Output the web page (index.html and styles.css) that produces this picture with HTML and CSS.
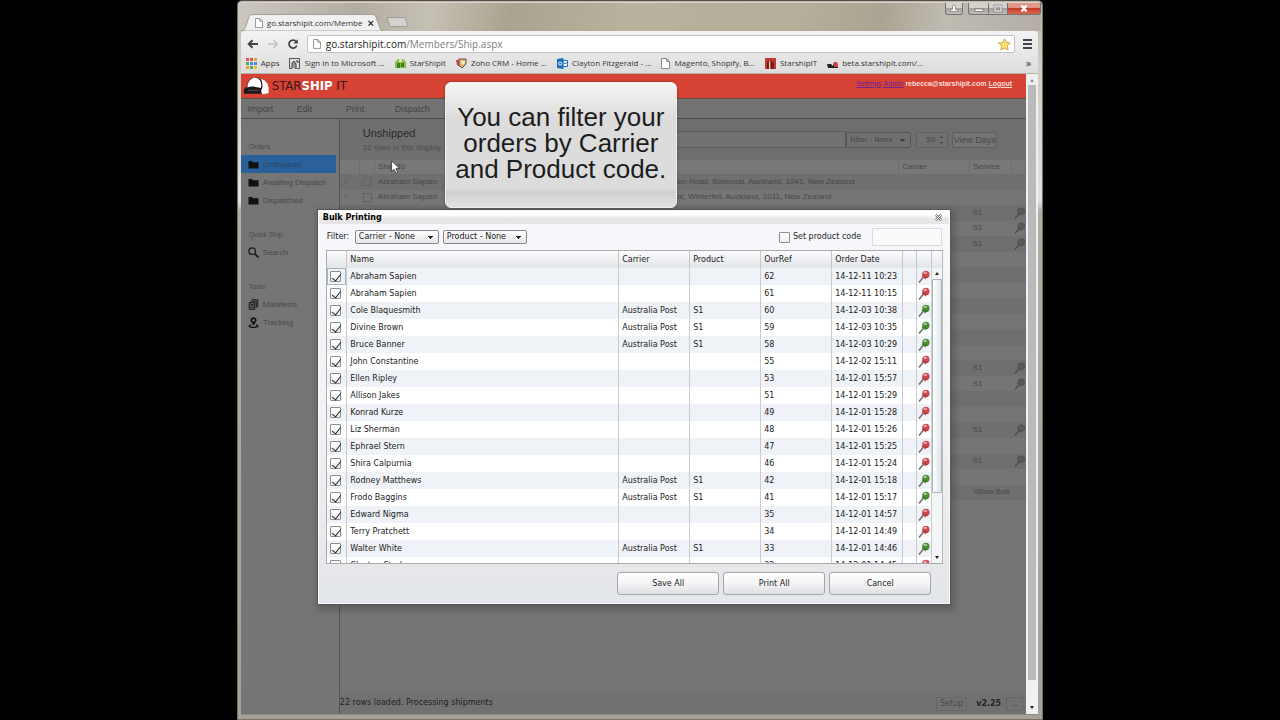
FILE: index.html
```html
<!DOCTYPE html>
<html lang="en">
<head>
<meta charset="utf-8">
<title>StarShipIt - Bulk Printing</title>
<link rel="stylesheet" href="styles.css">
</head>
<body>
<svg class="defs" aria-hidden="true">
  <symbol id="pin" viewBox="0 0 12 13">
    <path d="M1 12.500 L5.500 7" stroke="#6e6a6a" stroke-width="1.500" fill="none"/>
    <path d="M3.600 6.200 L7.600 9.400 L8.600 7.600 L5.200 4.800Z" fill="currentColor"/>
    <circle cx="7.900" cy="4.400" r="3.700" fill="currentColor"/>
    <path d="M5.400 6.600 Q7.800 6.800 9.600 7.800" stroke="#000" stroke-opacity=".3" fill="none"/>
    <ellipse cx="7.200" cy="2.900" rx="1.700" ry="1.100" fill="#fff" fill-opacity=".55"/>
  </symbol>
  <symbol id="dimpin" viewBox="0 0 12 13">
    <path d="M1 12.500 L5.500 7" stroke="#4c4c4c" stroke-width="1.500" fill="none"/>
    <path d="M3.600 6.200 L7.600 9.400 L8.600 7.600 L5.200 4.800Z" fill="#505050"/>
    <circle cx="7.900" cy="4.400" r="3.700" fill="#5a5a5a" stroke="#4c4c4c" stroke-width=".8"/>
  </symbol>
  <symbol id="doc" viewBox="0 0 9 11">
    <path d="M.5 .5H5.5L8.5 3.5V10.5H.5ZM5.5 .5V3.5H8.5" fill="#fff" stroke="#888"/>
  </symbol>
  <symbol id="folder" viewBox="0 0 11 9">
    <path d="M.5 1H4L5 2.2H10.5V8.5H.5Z" fill="#111"/>
  </symbol>
  <symbol id="helmet" viewBox="0 0 28 20">
    <path d="M1 18 Q0 12 4 11 Q5 2 11 1.500 Q17 0 20 5 L21 18Z" fill="#1c1718"/>
    <path d="M4.500 11.500 Q5 3 11 1.500 Q17 1 18.500 6 Q19.500 9 18.500 12 Q10 9.500 4.500 11.500Z" fill="#fff"/>
    <path d="M5 14.500 H16" stroke="#55504f" stroke-width="1"/>
    <path d="M18.500 2.500 Q28 5 26.500 17.500 L20.500 18.500 Q17.500 16 20 12 Q21 8 18.500 2.500Z" fill="#fff"/>
  </symbol>
</svg>

<div class="window">
  <header class="titlebar">
    <div class="tab">
      <svg class="tab-shape" viewBox="0 0 143 17" preserveAspectRatio="none" aria-hidden="true"><path d="M0 17 C4 17 4 14 6 9 C8 3 8 .5 12 .5 H131 C135 .5 135 3 137 9 C139 14 139 17 143 17Z" fill="#f1f0f0" stroke="#8a867f" stroke-width=".7"/></svg>
      <svg class="tab-icon" aria-hidden="true"><use href="#doc"/></svg>
      <span class="tab-title">go.starshipit.com/Membe</span>
      <button class="tab-close" aria-label="Close tab">×</button>
    </div>
    <button class="new-tab" aria-label="New tab"></button>
    <div class="win-controls">
      <button class="wc user" aria-label="User"><svg viewBox="0 0 10 9"><path d="M1.500 7.500V5.500H3.500V2.500a1.500 1.500 0 0 1 3 0V5.500H8.500V7.500Z" fill="#fff" stroke="#666" stroke-width=".6"/></svg></button>
      <button class="wc min" aria-label="Minimise"><svg viewBox="0 0 10 9"><rect x="1" y="5" width="8" height="2.500" fill="#fff" stroke="#555" stroke-width=".6"/></svg></button>
      <button class="wc max" aria-label="Maximise"><svg viewBox="0 0 10 9"><rect x="2" y="2" width="6" height="5" fill="none" stroke="#555" stroke-width="2.400"/><rect x="2" y="2" width="6" height="5" fill="none" stroke="#fff" stroke-width="1.300"/></svg></button>
      <button class="wc close" aria-label="Close"><svg viewBox="0 0 10 9"><path d="M2.500 1.500 7.500 7.500M7.500 1.500 2.500 7.500" stroke="#fff" stroke-width="2"/></svg></button>
    </div>
  </header>

  <div class="chrome">
    <div class="toolbar">
      <button class="nav" aria-label="Back"><svg viewBox="0 0 12 10"><path d="M11 5H2M5.500 1.200 1.700 5l3.800 3.800" fill="none" stroke="#444" stroke-width="2"/></svg></button>
      <button class="nav" aria-label="Forward"><svg viewBox="0 0 12 10"><path d="M1 5H10M6.500 1.200 10.300 5 6.500 8.800" fill="none" stroke="#c2c2c2" stroke-width="1.600"/></svg></button>
      <button class="nav" aria-label="Reload"><svg viewBox="0 0 12 10"><path d="M9.200 2.600A4 4 0 1 0 9.800 6.500" fill="none" stroke="#444" stroke-width="1.800"/><path d="M10.800 .3V4.600H6.500Z" fill="#444"/></svg></button>
      <div class="omnibox">
        <svg class="tab-icon" aria-hidden="true"><use href="#doc"/></svg>
        <span class="url">go.starshipit.com<span class="path">/Members/Ship.aspx</span></span>
        <svg class="star" viewBox="0 0 14 14" aria-hidden="true"><path d="M7 .8 8.900 4.900 13.300 5.400 10 8.400 10.900 12.900 7 10.700 3.100 12.900 4 8.400 .7 5.400 5.100 4.900Z" fill="#fbe379" stroke="#c79a2e" stroke-width=".9"/></svg>
      </div>
      <button class="burger" aria-label="Menu"><i></i><i></i><i></i></button>
    </div>
    <nav class="bookmarks">
      <a href="#"><svg viewBox="0 0 11 11"><path d="M0 0h3v3H0zM4 0h3v3H4z" fill="#d8584c"/><path d="M8 0h3v3H8zM0 8h3v3H0z" fill="#e8a33b"/><path d="M0 4h3v3H0zM4 8h3v3H4z" fill="#52a55c"/><path d="M4 4h3v3H4zM8 4h3v3H8z" fill="#4b86d8"/><path d="M8 8h3v3H8z" fill="#e4bf3a"/></svg>Apps</a>
      <a href="#"><svg viewBox="0 0 11 11"><path d="M.5 3V.5h10v10H8M.5 3v7.500H3" fill="#ddd" stroke="#555"/><path d="M3 10V5l2-2 2 3v5M7 3h2v2" fill="#999" stroke="#444"/></svg>Sign in to Microsoft ...</a>
      <a href="#"><svg viewBox="0 0 11 11"><path d="M0 4 3 1h5l3 3v6H0z" fill="#8abf45"/><path d="M2 10V5h3v5zM6 9V5h3v4z" fill="#3d7a2c"/><path d="M4 1h3v3H4z" fill="#d8e7bd"/></svg>StarShipIt</a>
      <a href="#"><svg viewBox="0 0 11 11"><path d="M0 2h4v7L1 7z" fill="#c8433d"/><path d="M3 1h7v5l-4 4-3-3z" fill="#deb36c" stroke="#60574c"/><path d="M5 3h4v2L6 7z" fill="#f7ecc9"/></svg>Zoho CRM - Home ...</a>
      <a href="#"><svg viewBox="0 0 11 11"><path d="M6 2.500h4.500v6H6m0-4 2 1.500 2.500-2" fill="#fff" stroke="#1b6fb9"/><path d="M0 1 6.500 0v11L0 10z" fill="#1b6fb9"/><circle cx="3.200" cy="5.500" r="1.500" fill="none" stroke="#fff"/></svg>Clayton Fitzgerald - ...</a>
      <a href="#"><svg class="narrow"><use href="#doc"/></svg>Magento, Shopify, B...</a>
      <a href="#"><svg viewBox="0 0 11 11"><path d="M0 0h11v11H0z" fill="#c33a2e"/><path d="M2 11V4l2-2v9zM6 11V2l3 3v6z" fill="#702019"/><path d="M4 3h1v8H4z" fill="#f0c9c0"/></svg>StarshipIT</a>
      <a href="#"><svg viewBox="0 0 11 11"><path d="M0 6h4l2 2 1-4h3l1 6H1z" fill="#26201f"/><path d="M7 4h3l1 5H7z" fill="#d33d45"/></svg>beta.starshipit.com/...</a>
      <span class="more">»</span>
    </nav>
  </div>

  <div class="page">
    <div class="app">
      <div class="brandbar">
        <svg class="helmet" aria-hidden="true"><use href="#helmet"/></svg>
        <span class="brand">STAR<b>SHIP</b> IT</span>
        <div class="account"><a href="#">Settings</a> <a href="#">Admin</a> <b>rebecca@starshipit.com</b> <a href="#" class="logout">Logout</a></div>
      </div>
      <nav class="menubar"><a href="#">Import</a><a href="#">Edit</a><a href="#">Print</a><a href="#">Dispatch</a></nav>
      <div class="workspace">
        <aside class="sidebar">
          <h2>Orders</h2>
          <a href="#" class="active"><svg viewBox="0 0 11 9"><use href="#folder"/></svg>Unshipped</a>
          <a href="#"><svg viewBox="0 0 11 9"><use href="#folder"/></svg>Awaiting Dispatch</a>
          <a href="#"><svg viewBox="0 0 11 9"><use href="#folder"/></svg>Dispatched</a>
          <h2>Quick Ship</h2>
          <a href="#"><svg viewBox="0 0 11 11"><circle cx="4.200" cy="4.200" r="3.300" fill="none" stroke="#1a1a1a" stroke-width="1.200"/><path d="M6.600 6.600 10.400 10.400" stroke="#1a1a1a" stroke-width="1.800"/></svg>Search</a>
          <h2>Tools</h2>
          <a href="#"><svg viewBox="0 0 11 11"><path d="M4 .7H9.700V8M2.500 2.200H8.200V9" fill="none" stroke="#1a1a1a"/><path d="M1.200 3.700H6.700V10.400H1.200Z" fill="#666" stroke="#1a1a1a"/><path d="M2.500 5.500h3M2.500 7h3M2.500 8.500h3" stroke="#1a1a1a" stroke-width=".8"/></svg>Manifests</a>
          <a href="#"><svg viewBox="0 0 11 11"><path d="M5.500 8.500 3.200 5A2.900 2.900 0 1 1 7.800 5Z" fill="#111"/><circle cx="5.500" cy="3.200" r="1.200" fill="#777"/><path d="M3 7.500 1 9.300 3.500 10.400H7.500L10 9.300 8 7.500" fill="none" stroke="#111" stroke-width="1.200"/></svg>Tracking</a>
        </aside>
        <main class="main">
          <div class="listhead">
            <div class="heading"><h1>Unshipped</h1><p>22 rows in this display</p></div>
            <input class="search" type="text" aria-label="Search orders">
            <select class="dimselect" aria-label="Filter"><option>Filter - None</option></select>
            <input class="days" type="text" value="50" aria-label="Days">
            <button class="viewdays">View Days</button>
          </div>
          <table class="orders">
            <colgroup><col class="o-check"><col class="o-box"><col class="o-ship"><col><col class="o-carrier"><col class="o-service"><col class="o-pin"></colgroup>
            <thead><tr><th></th><th></th><th>Ship To</th><th></th><th>Carrier</th><th>Service</th><th></th></tr></thead>
            <tbody>
              <tr><td class="tick">✓</td><td><i class="box"></i></td><td>Abraham Sapien</td><td>Union Road, Balmoral, Auckland, 1041, New Zealand</td><td></td><td></td><td></td></tr>
              <tr><td class="tick">✓</td><td><i class="box"></i></td><td>Abraham Sapien</td><td>Moat, Winterfell, Auckland, 1011, New Zealand</td><td></td><td></td><td></td></tr>
              <tr><td colspan="5"></td><td>S1</td><td><svg class="pin"><use href="#dimpin"/></svg></td></tr>
              <tr><td colspan="5"></td><td>S1</td><td><svg class="pin"><use href="#dimpin"/></svg></td></tr>
              <tr><td colspan="5"></td><td>S1</td><td><svg class="pin"><use href="#dimpin"/></svg></td></tr>
              <tr><td colspan="7"></td></tr>
              <tr><td colspan="7"></td></tr>
              <tr><td colspan="7"></td></tr>
              <tr><td colspan="7"></td></tr>
              <tr><td colspan="7"></td></tr>
              <tr><td colspan="7"></td></tr>
              <tr><td colspan="7"></td></tr>
              <tr><td colspan="5"></td><td>S1</td><td><svg class="pin"><use href="#dimpin"/></svg></td></tr>
              <tr><td colspan="5"></td><td>S1</td><td><svg class="pin"><use href="#dimpin"/></svg></td></tr>
              <tr><td colspan="7"></td></tr>
              <tr><td colspan="7"></td></tr>
              <tr><td colspan="5"></td><td>S1</td><td><svg class="pin"><use href="#dimpin"/></svg></td></tr>
              <tr><td colspan="7"></td></tr>
              <tr><td colspan="5"></td><td>S1</td><td><svg class="pin"><use href="#dimpin"/></svg></td></tr>
              <tr><td colspan="7"></td></tr>
              <tr><td colspan="5"></td><td colspan="2">XBow Bolt</td></tr>
              <tr><td colspan="7"></td></tr>
            </tbody>
          </table>
          <footer class="status"><span>22 rows loaded. Processing shipments</span><button>Setup</button><b>v2.25</b><button>...</button></footer>
        </main>
      </div>
    </div>
    <div class="scrollbar"><i class="up"></i><div class="thumb"></div><i class="down"></i></div>

    <section class="dialog" role="dialog" aria-labelledby="dlg-title">
      <div class="dlg-title"><h2 id="dlg-title">Bulk Printing</h2><button aria-label="Close dialog"><svg viewBox="0 0 8 8"><path d="M1 1 7 7M7 1 1 7" stroke="#777" stroke-width="2.600"/><path d="M1 1 7 7M7 1 1 7" stroke="#fff" stroke-width="1"/></svg></button></div>
      <div class="filters">
        <label for="f-carrier">Filter:</label>
        <select id="f-carrier"><option>Carrier - None</option></select>
        <select aria-label="Product filter"><option>Product - None</option></select>
        <div class="setcode"><input type="checkbox" id="setcode"><label for="setcode">Set product code</label></div>
        <input class="code" type="text" aria-label="Product code">
      </div>
      <div class="grid">
        <table>
          <colgroup><col class="c-check"><col><col class="c-mid"><col class="c-mid"><col class="c-mid"><col class="c-mid"><col class="c-gap"><col class="c-pin"></colgroup>
          <thead><tr><th></th><th>Name</th><th>Carrier</th><th>Product</th><th>OurRef</th><th>Order Date</th><th></th><th></th></tr></thead>
          <tbody>
            <tr><td class="focus"><input type="checkbox" checked aria-label="Select 62"></td><td>Abraham Sapien</td><td></td><td></td><td>62</td><td>14-12-11 10:23</td><td></td><td><svg class="pin red"><use href="#pin"/></svg></td></tr>
            <tr><td><input type="checkbox" checked aria-label="Select 61"></td><td>Abraham Sapien</td><td></td><td></td><td>61</td><td>14-12-11 10:15</td><td></td><td><svg class="pin red"><use href="#pin"/></svg></td></tr>
            <tr><td><input type="checkbox" checked aria-label="Select 60"></td><td>Cole Blaquesmith</td><td>Australia Post</td><td>S1</td><td>60</td><td>14-12-03 10:38</td><td></td><td><svg class="pin green"><use href="#pin"/></svg></td></tr>
            <tr><td><input type="checkbox" checked aria-label="Select 59"></td><td>Divine Brown</td><td>Australia Post</td><td>S1</td><td>59</td><td>14-12-03 10:35</td><td></td><td><svg class="pin green"><use href="#pin"/></svg></td></tr>
            <tr><td><input type="checkbox" checked aria-label="Select 58"></td><td>Bruce Banner</td><td>Australia Post</td><td>S1</td><td>58</td><td>14-12-03 10:29</td><td></td><td><svg class="pin green"><use href="#pin"/></svg></td></tr>
            <tr><td><input type="checkbox" checked aria-label="Select 55"></td><td>John Constantine</td><td></td><td></td><td>55</td><td>14-12-02 15:11</td><td></td><td><svg class="pin red"><use href="#pin"/></svg></td></tr>
            <tr><td><input type="checkbox" checked aria-label="Select 53"></td><td>Ellen Ripley</td><td></td><td></td><td>53</td><td>14-12-01 15:57</td><td></td><td><svg class="pin red"><use href="#pin"/></svg></td></tr>
            <tr><td><input type="checkbox" checked aria-label="Select 51"></td><td>Allison Jakes</td><td></td><td></td><td>51</td><td>14-12-01 15:29</td><td></td><td><svg class="pin red"><use href="#pin"/></svg></td></tr>
            <tr><td><input type="checkbox" checked aria-label="Select 49"></td><td>Konrad Kurze</td><td></td><td></td><td>49</td><td>14-12-01 15:28</td><td></td><td><svg class="pin red"><use href="#pin"/></svg></td></tr>
            <tr><td><input type="checkbox" checked aria-label="Select 48"></td><td>Liz Sherman</td><td></td><td></td><td>48</td><td>14-12-01 15:26</td><td></td><td><svg class="pin red"><use href="#pin"/></svg></td></tr>
            <tr><td><input type="checkbox" checked aria-label="Select 47"></td><td>Ephrael Stern</td><td></td><td></td><td>47</td><td>14-12-01 15:25</td><td></td><td><svg class="pin red"><use href="#pin"/></svg></td></tr>
            <tr><td><input type="checkbox" checked aria-label="Select 46"></td><td>Shira Calpurnia</td><td></td><td></td><td>46</td><td>14-12-01 15:24</td><td></td><td><svg class="pin red"><use href="#pin"/></svg></td></tr>
            <tr><td><input type="checkbox" checked aria-label="Select 42"></td><td>Rodney Matthews</td><td>Australia Post</td><td>S1</td><td>42</td><td>14-12-01 15:18</td><td></td><td><svg class="pin green"><use href="#pin"/></svg></td></tr>
            <tr><td><input type="checkbox" checked aria-label="Select 41"></td><td>Frodo Baggins</td><td>Australia Post</td><td>S1</td><td>41</td><td>14-12-01 15:17</td><td></td><td><svg class="pin green"><use href="#pin"/></svg></td></tr>
            <tr><td><input type="checkbox" checked aria-label="Select 35"></td><td>Edward Nigma</td><td></td><td></td><td>35</td><td>14-12-01 14:57</td><td></td><td><svg class="pin red"><use href="#pin"/></svg></td></tr>
            <tr><td><input type="checkbox" checked aria-label="Select 34"></td><td>Terry Pratchett</td><td></td><td></td><td>34</td><td>14-12-01 14:49</td><td></td><td><svg class="pin red"><use href="#pin"/></svg></td></tr>
            <tr><td><input type="checkbox" checked aria-label="Select 33"></td><td>Walter White</td><td>Australia Post</td><td>S1</td><td>33</td><td>14-12-01 14:46</td><td></td><td><svg class="pin green"><use href="#pin"/></svg></td></tr>
            <tr><td><input type="checkbox" checked aria-label="Select 32"></td><td>Clayton Stark</td><td></td><td></td><td>32</td><td>14-12-01 14:45</td><td></td><td><svg class="pin red"><use href="#pin"/></svg></td></tr>
          </tbody>
        </table>
        <div class="gridscroll"><div class="cap"></div><i class="up"></i><div class="thumb"></div><i class="down"></i></div>
      </div>
      <div class="actions"><button>Save All</button><button>Print All</button><button>Cancel</button></div>
    </section>

    <p class="callout">You can filter your orders by Carrier and Product code.</p>
    <svg class="cursor" viewBox="0 0 9 14" aria-hidden="true"><path d="M.6 .8V11.500L3.100 9.300 4.800 13.200 6.600 12.400 4.900 8.600H8.300Z" fill="#fff" stroke="#222" stroke-width=".7"/></svg>
  </div>
</div>
</body>
</html>
```
FILE: styles.css
```css
* { box-sizing: border-box; }
body { margin: 0; background: #000; font-family: "Liberation Sans", Arial, sans-serif; font-size: 9px; color: #222; }
button, input, select { font: inherit; color: inherit; margin: 0; padding: 0; border: 0; background: none; border-radius: 0; }
h1, h2, p { margin: 0; font-weight: normal; }
a { color: inherit; text-decoration: none; }
svg { display: block; flex: none; }
table { border-collapse: collapse; table-layout: fixed; width: 100%; }
td, th { padding: 0; text-align: left; font-weight: normal; white-space: nowrap; }
.defs { position: absolute; width: 0; height: 0; }

.window {
  width: 63%; min-height: 100vh; margin: 0 auto; padding: 1px 4px 4px 3px;
  display: flex; flex-direction: column;
  background: linear-gradient(180deg, #bfb8a8 0, #cfcbc0 60px, #e4e1da 200px, #b3ada2 210px, #a7a197 100%);
  border: 1px solid #77716a; border-top-color: #554d4d; border-radius: 5px 5px 0 0;
}

/* title bar */
.titlebar {
  display: flex; align-items: flex-end; height: 29px; margin: 0 -3px; padding-left: 3px;
  border-top: 1px solid #d9d4cb; border-radius: 4px 4px 0 0;
  background: linear-gradient(100deg, #cbc7bf 0, #b3aca2 15%, #c5c0b4 24%, #aaa38f 34%, #b8b19c 48%, #b5ae99 70%, #aaa493 80%, #bfbbb1 88%, #b4aea6 100%);
}
.tab { position: relative; display: flex; align-items: center; width: 143px; height: 17px; padding-left: 14px; font: 8px/16px "Open Sans", "Noto Sans", sans-serif; color: #333; }
.tab > * { position: relative; }
.tab .tab-shape { position: absolute; inset: 0; width: 100%; height: 100%; }
.tab-icon { width: 8px; height: 10px; margin-right: 4px; }
.tab-title { flex: 1; overflow: hidden; white-space: nowrap; }
.tab-close { width: 10px; margin-right: 8px; font: bold 11px/14px "Liberation Sans", sans-serif; color: #333; }
.new-tab { width: 19px; height: 10px; margin: 0 0 4px 4px; background: #d5d3d0; border: 1px solid #a29c94; border-radius: 2px; transform: skewX(20deg); }
.win-controls { display: flex; align-self: flex-start; margin-left: auto; }
.wc { width: 20px; height: 12px; display: grid; place-items: center; border: 1px solid #77706c; border-top: 0; background: linear-gradient(#d5d1cd 0 45%, #a5a09c 50%, #c3bfbb); }
.wc svg { width: 10px; height: 9px; }
.wc.user { width: 18px; margin-right: 5px; border-radius: 0 0 3px 3px; }
.wc.min { border-radius: 0 0 0 3px; border-right: 0; }
.wc.close { width: 33px; border-radius: 0 0 3px 0; background: linear-gradient(#e29a8c 0 40%, #c23c28 50%, #d9694f); border-left: 0; }

/* browser chrome */
.chrome { background: linear-gradient(#f4f3f3, #dedddd); border-bottom: 1px solid #b5b0ac; border-radius: 3px 3px 0 0; color: #333; }
.toolbar { display: flex; align-items: center; height: 24px; padding: 2px 6px 0; gap: 8px; }
.nav { width: 12px; height: 12px; }
.nav svg { width: 12px; height: 12px; }
.omnibox { flex: 1; display: flex; align-items: center; height: 18px; padding: 0 3px 0 5px; background: #fff; border: 1px solid #c4c2c2; border-radius: 2px; font: 10px/16px "Open Sans", "Noto Sans", sans-serif; color: #222; }
.omnibox .tab-icon { margin-right: 5px; }
.path { color: #808080; }
.star { width: 13px; height: 13px; margin-left: auto; }
.burger { display: grid; gap: 2px; width: 9px; }
.burger i { height: 2px; background: #444; }
.bookmarks { display: flex; align-items: center; height: 18px; padding: 0 7px 2px 5px; gap: 10px; font: 8px/16px "Open Sans", "Noto Sans", sans-serif; white-space: nowrap; }
.bookmarks a { display: flex; align-items: center; gap: 4px; }
.bookmarks svg { width: 11px; height: 11px; }
.bookmarks svg.narrow { width: 9px; }
.more { margin-left: auto; font-size: 11px; }

/* page */
.page { position: relative; flex: 1; display: flex; border: 1px solid #8c8a86; border-width: 0 0 1px; }
.app { flex: 1; min-width: 0; display: flex; flex-direction: column; background: #757575; }
.brandbar { display: flex; align-items: center; height: 24px; padding: 0 14px 0 2px; background: #d64234; }
.helmet { width: 27px; height: 20px; }
.brand { margin-left: 2px; font: 13px/20px "DejaVu Sans Condensed", "DejaVu Sans", sans-serif; color: #3a1614; }
.brand b { color: #fff; }
.account { margin: 0 0 5px auto; font: bold 7px/10px "Liberation Sans", sans-serif; color: #f9dcd8; }
.account a { color: #6b2596; font-weight: normal; text-decoration: underline; }
.account .logout { color: #f9dcd8; font-weight: bold; }
.menubar { display: flex; align-items: center; height: 21px; padding-left: 7px; border-top: 1px solid #5d4d4b; border-bottom: 1px solid #4e4e4e; background: #737373; color: #434343; }
.menubar a { width: 49px; }
.workspace { flex: 1; display: flex; }
.sidebar { width: 99px; padding-top: 23px; border-right: 1px solid #555; background: #757575; color: #484848; font-size: 9px; }
.sidebar h2 { padding-left: 8px; font-size: 7px; line-height: 10px; margin: 0 0 3px; }
.sidebar a + h2 { margin: 21px 0 3px; }
.sidebar a { display: flex; align-items: center; gap: 4px; height: 18px; padding-left: 7px; font-size: 8px; white-space: nowrap; }
.sidebar svg { width: 11px; height: 11px; }
.sidebar .active { width: 95px; background: #2b619b; color: #274468; }

.main { flex: 1; min-width: 0; display: flex; flex-direction: column; color: #484848; font-size: 8px; }
.listhead { display: flex; align-items: center; height: 41px; padding: 0 29px 0 23px; background: #6e6e6e; }
.heading { width: 87px; }
.heading h1 { font-size: 11px; line-height: 16px; color: #2a2a2a; }
.heading p { line-height: 14px; color: #4d4d4d; white-space: nowrap; }
.search { flex: 1; min-width: 0; height: 17px; border: 1px solid #5a5a5a; background: #727272; }
.days {
  width: 32px; height: 16px; margin: 0 4px 0 5px; padding-left: 9px; border: 1px solid #616161; font-size: 8px;
  background:
    linear-gradient(#4a4a4a, #4a4a4a) right 5px top 3px / 1px 1px no-repeat,
    linear-gradient(#4a4a4a, #4a4a4a) right 4px top 4px / 3px 1px no-repeat,
    linear-gradient(#4a4a4a, #4a4a4a) right 4px top 9px / 3px 1px no-repeat,
    linear-gradient(#4a4a4a, #4a4a4a) right 5px top 10px / 1px 1px no-repeat,
    #707070;
}
.viewdays { width: 45px; height: 16px; border: 1px solid #5f5f5f; border-radius: 2px; background: #757575; font-size: 9px; white-space: nowrap; }
.orders { height: 356px; }
.orders th { height: 14px; background: #787878; border-right: 1px solid #6c6c6c; }
.orders td { height: 15px; }
.orders td, .orders th { padding-left: 3px; line-height: 10px; }
.orders tbody tr:nth-child(odd) { background: #6f6f6f; }
.o-check { width: 20px; }
.o-box { width: 15px; }
.o-ship { width: 288px; }
.o-carrier { width: 71px; }
.o-service { width: 42px; }
.o-pin { width: 14px; }
.tick { color: #5f5f5f; }
.box { display: block; width: 9px; height: 9px; border: 1px solid #626262; }
.orders .pin { width: 11px; height: 12px; margin-left: -1px; }
.status { display: flex; align-items: center; height: 20px; margin-top: auto; padding-right: 3px; font: 8px/16px "DejaVu Sans", sans-serif; color: #222; background: #717171; }
.status span { flex: 1; padding-bottom: 3px; }
.status b { margin: 0 5px 0 9px; }
.status button { min-width: 17px; height: 14px; padding: 0 3px; border: 1px solid #666; color: #484848; line-height: 12px; }

.scrollbar, .gridscroll { display: flex; flex-direction: column; align-items: center; }
.scrollbar { width: 12px; padding: 5px 1px; background: #f1f0f0; }
.scrollbar .thumb { width: 8px; flex: 1; margin: 3px 0 26px; background: #bababa; }
.up, .down { width: 0; height: 0; border: 2px solid transparent; border-width: 0 2px 3px; border-bottom-color: #888; }
.down { border-width: 3px 2px 0; border-top-color: #222; }

/* dialog */
.dialog {
  position: absolute; top: 136px; left: 77px; right: 88px; padding-bottom: 8px;
  font: 8px/10px "DejaVu Sans", sans-serif; color: #222;
  background: linear-gradient(#f7f8fc, #f3f3f5 50%, #e8e7ea 90%, #e2e7ec);
  border: 1px solid #fafafa; box-shadow: 0 0 0 1px #555, 2px 3px 7px 3px rgba(0, 0, 0, .2);
}
.dlg-title { display: flex; align-items: center; justify-content: space-between; height: 13px; padding: 0 7px 0 4px; background: linear-gradient(#fff 30%, #e6e6e6 60%); }
.dlg-title h2 { font-size: 8px; font-weight: bold; color: #000; }
.dlg-title svg { width: 7px; height: 7px; }
.filters { display: flex; align-items: center; height: 26px; padding: 0 7px 0 8px; }
.filters label[for="f-carrier"] { width: 28px; }
select { appearance: none; padding: 0 3px; border: 1px solid #888; border-radius: 2px; }
.filters select {
  width: 84px; height: 14px; margin-right: 4px; color: #222;
  background:
    linear-gradient(#222, #222) right 5px top 5px / 5px 1px no-repeat,
    linear-gradient(#222, #222) right 6px top 6px / 3px 1px no-repeat,
    linear-gradient(#222, #222) right 7px top 7px / 1px 1px no-repeat,
    linear-gradient(#fefefe, #e6e7ea);
}
.dimselect {
  width: 65px; height: 16px; font: 7px/12px "DejaVu Sans", sans-serif; border-color: #555; color: #444;
  background:
    linear-gradient(#3d3d3d, #3d3d3d) right 5px top 6px / 5px 1px no-repeat,
    linear-gradient(#3d3d3d, #3d3d3d) right 6px top 7px / 3px 1px no-repeat,
    linear-gradient(#3d3d3d, #3d3d3d) right 7px top 8px / 1px 1px no-repeat,
    linear-gradient(#707070, #707070);
}
.setcode { display: flex; align-items: center; gap: 3px; margin-left: auto; }
.code { width: 70px; height: 18px; margin-left: 11px; border: 1px solid #d9dadd; background: #fafafb; }

input[type="checkbox"] { appearance: none; position: relative; display: block; width: 11px; height: 11px; border: 1px solid #8b8d91; border-radius: 1px; background: linear-gradient(#fff, #eceef0); }
input[type="checkbox"]:checked::after { content: ""; position: absolute; left: 3px; top: 0; width: 4px; height: 8px; border: solid #222; border-width: 0 1px 1px 0; transform: rotate(38deg); }

.grid { display: flex; height: 314px; margin: 0 6px 0 7px; overflow: hidden; align-items: flex-start; background: #fff; border: 1px solid #a9acb1; border-right-width: 0; }
.grid table { flex: 1; width: auto; }
.grid th { height: 17px; padding-left: 3px; background: linear-gradient(#fbfbfc, #e2e5e8); border-right: 1px solid #c5c8cc; }
.grid td { height: 17px; padding-left: 3px; border-right: 1px solid #c9ccd0; }
.grid td:first-child { padding-left: 3px; }
.grid tbody tr:nth-child(odd) { background: #eff2f6; }
.grid td.focus { box-shadow: inset 0 0 0 1px #9fb9c4; }
.c-check { width: 20px; }
.c-mid { width: 71px; }
.c-gap { width: 14px; }
.c-pin { width: 15px; }
.grid .pin { width: 12px; height: 13px; margin-left: -2px; }
.red { color: #cf4a50; }
.green { color: #4c8f38; }
.gridscroll { width: 11px; align-self: stretch; background: #f3f5f7; padding-bottom: 4px; border-right: 1px solid #b5b9be; }
.gridscroll .cap { width: 100%; height: 17px; background: linear-gradient(#fbfbfc, #e2e5e8); }
.gridscroll .up { margin: 4px 0; border-bottom-color: #222; }
.gridscroll .thumb { width: 10px; height: 214px; border: 1px solid #aeb6bd; border-radius: 1px; background: linear-gradient(90deg, #fff, #dde4e9); }
.gridscroll .down { margin-top: auto; }
.actions { display: flex; justify-content: flex-end; gap: 4px; padding: 8px 18px 0 0; }
.actions button { width: 102px; height: 23px; border: 1px solid #a6a6aa; border-radius: 3px; background: linear-gradient(#fff, #f4f4f6 50%, #dfdfe3); }

.callout {
  position: absolute; top: 8px; left: 204px; width: 232px; min-height: 126px; padding: 21px 4px 0;
  font-size: 26px; line-height: 26px; text-align: center; color: #1d1d1d;
  background: linear-gradient(#f6f6f4, #dcdcdc 28%, #dcdcdc 85%, #d0d0d0 88%, #e2e2e2);
  border: 1px solid #eee; border-radius: 6px; box-shadow: 0 0 3px rgba(0, 0, 0, .3);
}
.cursor { position: absolute; top: 86px; left: 150px; width: 9px; height: 14px; }
```
